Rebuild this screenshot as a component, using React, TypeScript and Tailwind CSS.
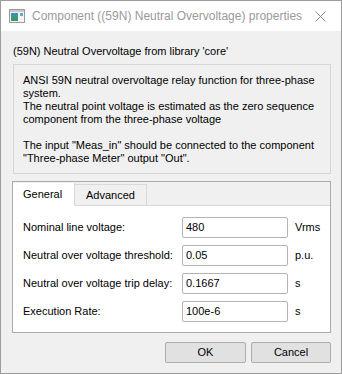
import React from 'react';

const font = { fontFamily: '"Liberation Sans", Arial, sans-serif' };

const fields = [
  { label: 'Nominal line voltage:', value: '480', unit: 'Vrms' },
  { label: 'Neutral over voltage threshold:', value: '0.05', unit: 'p.u.' },
  { label: 'Neutral over voltage trip delay:', value: '0.1667', unit: 's' },
  { label: 'Execution Rate:', value: '100e-6', unit: 's' },
];

function TitleIcon() {
  return (
    <svg width="16" height="14" viewBox="0 0 16 14">
      <defs>
        <linearGradient id="g" x1="0" y1="0" x2="0" y2="1">
          <stop offset="0" stopColor="#3f8fbf" />
          <stop offset="1" stopColor="#3a9a5a" />
        </linearGradient>
      </defs>
      <rect x="0.5" y="0.5" width="15" height="13" fill="#f4f4f4" stroke="#9a9a9a" />
      <rect x="1" y="1" width="14" height="2" fill="#c8c8c8" />
      <rect x="2" y="4" width="7" height="8" fill="url(#g)" />
      <rect x="11" y="4" width="3" height="3" fill="#6aa6c8" />
    </svg>
  );
}

export default function App() {
  return (
    <div className="w-[342px] h-[374px] flex flex-col border border-[#9c9c9c] bg-[#f0f0f0] text-[11px] text-black" style={font}>
      <div className="h-[30px] bg-white flex items-center pl-[8px] pr-[15px] shrink-0">
        <TitleIcon />
        <span className="ml-[7px] text-[12px] text-[#9a9a9a] whitespace-nowrap">
          Component ((59N) Neutral Overvoltage) properties
        </span>
        <svg className="ml-auto shrink-0" width="11" height="11" viewBox="0 0 11 11">
          <path d="M0.5 0.5 L10.5 10.5 M10.5 0.5 L0.5 10.5" stroke="#8a8a8a" strokeWidth="1" />
        </svg>
      </div>

      <div className="flex flex-col px-[11px] pt-[13px]">
        <div className="leading-[14px] pl-[1px]">(59N) Neutral Overvoltage from library 'core'</div>

        <div className="mt-[6px] ml-[1px] mr-[-1px] border border-[#d6d6d6] pl-[9px] pr-[6px] pt-[9px] pb-[8px] leading-[13px]">
          <div>ANSI 59N neutral overvoltage relay function for three-phase</div>
          <div>system.</div>
          <div>The neutral point voltage is estimated as the zero sequence</div>
          <div>component from the three-phase voltage</div>
          <div className="h-[13px]" />
          <div>The input "Meas_in" should be connected to the component</div>
          <div>"Three-phase Meter" output "Out".</div>
        </div>

        <div className="mt-[7px] mr-[-1px] border border-[#ababab] flex flex-col">
          <div className="h-[23px] flex items-end">
            <div className="h-[23px] w-[62px] bg-white border-r border-[#d9d9d9] flex items-center pl-[10px] relative z-10 mb-[-1px]">
              General
            </div>
            <div className="h-[21px] w-[72px] border border-l-0 border-b-0 border-[#d9d9d9] bg-[#f0f0f0] flex items-center justify-center">
              Advanced
            </div>
          </div>
          <div className="bg-white border-t border-[#d9d9d9] pl-[10px] pt-[11px] pb-[10px] flex flex-col gap-[7px]">
            {fields.map((f) => (
              <div key={f.label} className="flex items-center h-[21px]">
                <div className="w-[159px]">{f.label}</div>
                <div className="w-[106px] h-[21px] border border-[#b4b4b4] rounded-[2px] bg-white flex items-center pl-[3px] text-[#000]">
                  {f.value}
                </div>
                <div className="ml-[7px]">{f.unit}</div>
              </div>
            ))}
          </div>
        </div>

        <div className="flex justify-end gap-[5px] mt-[9px] mr-[-1px]">
          <button className="w-[81px] h-[21px] bg-[#e1e1e1] border border-[#adadad] rounded-[2px]">OK</button>
          <button className="w-[80px] h-[21px] bg-[#e1e1e1] border border-[#adadad] rounded-[2px]">Cancel</button>
        </div>
      </div>
    </div>
  );
}
